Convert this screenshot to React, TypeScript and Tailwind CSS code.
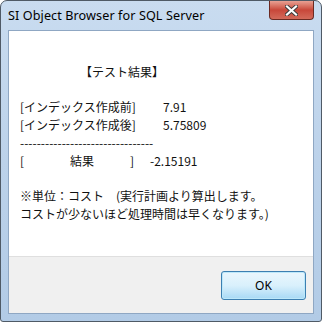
export default function App() {
  const body = {
    fontFamily: '"Noto Sans CJK JP", "Noto Sans", sans-serif',
  };
  return (
    <div className="w-[322px] h-[322px] bg-white">
      <div className="w-[322px] h-[322px] rounded-t-[7px] rounded-b-[3px] border border-[#4f5a66] bg-gradient-to-b from-[#c9dcf0] via-[#bcd2ea] to-[#b2cbe6] flex flex-col">
        {/* title bar */}
        <div className="h-[29px] flex items-start justify-between pl-[7px] pr-[7px]">
          <span
            className="mt-[7px] text-[12.6px] tracking-[0.1px] leading-[16px] text-black"
            style={{ fontFamily: '"Noto Sans", sans-serif' }}
          >
            SI Object Browser for SQL Server
          </span>
          <div className="w-[45px] h-[19px] rounded-b-[4px] border border-t-0 border-[#6b2a22] bg-gradient-to-b from-[#e8a093] via-[#c8473a] to-[#d36a5a] flex items-center justify-center">
            <svg width="13" height="11" viewBox="0 0 13 11">
              <path
                d="M2 1.5 L11 9.5 M11 1.5 L2 9.5"
                stroke="#3a3a3a"
                strokeWidth="4"
                strokeLinecap="square"
              />
              <path
                d="M2 1.5 L11 9.5 M11 1.5 L2 9.5"
                stroke="#ffffff"
                strokeWidth="2.2"
                strokeLinecap="square"
              />
            </svg>
          </div>
        </div>

        {/* client area */}
        <div className="mx-[7px] h-[284px] border border-[#8fa7c3] flex flex-col">
          <div
            className="h-[225px] bg-white pl-[11px] pt-[32px] text-[12px] leading-[17.7px] text-[#111]"
            style={body}
          >
            <div className="pl-[60px]">【テスト結果】</div>
            <div className="h-[17.7px]" />
            <div className="flex">
              <span className="w-[143px]">[インデックス作成前]</span>
              <span>7.91</span>
            </div>
            <div className="flex">
              <span className="w-[143px]">[インデックス作成後]</span>
              <span>5.75809</span>
            </div>
            <div>--------------------------------</div>
            <div className="flex">
              <span className="w-[50px]">[</span>
              <span className="w-[60px]">結果</span>
              <span className="w-[20px]">]</span>
              <span>-2.15191</span>
            </div>
            <div className="h-[17.7px]" />
            <div>※単位：コスト　(実行計画より算出します。</div>
            <div>コストが少ないほど処理時間は早くなります。)</div>
          </div>
          <div className="flex-1 bg-[#f0f0f0] border-t border-[#dfdfdf] flex items-start justify-end pr-[7px] pt-[14px]">
            <button
              className="w-[85px] h-[29px] rounded-[3px] border border-[#3c7fb1] bg-gradient-to-b from-[#eaf6fd] via-[#d9f0fc] to-[#a7d9f5] shadow-[inset_0_0_0_1px_#bde8fa] text-[12px] text-black"
              style={{ fontFamily: '"Noto Sans", sans-serif' }}
            >
              OK
            </button>
          </div>
        </div>
      </div>
    </div>
  );
}
